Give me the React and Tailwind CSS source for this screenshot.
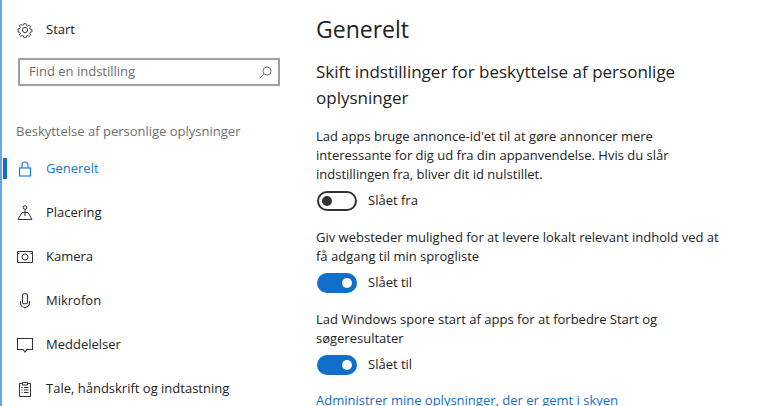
import React from 'react';

const GearIcon = () => (
  <svg width="16" height="16" viewBox="0 0 16 16" fill="none" stroke="#333" strokeWidth="1">
    <circle cx="8" cy="8" r="2.6" />
    <path d="M6.8 1h2.4l.4 2 1.3.6 1.7-1.1 1.7 1.7-1.1 1.7.6 1.3 2 .4v2.4l-2 .4-.6 1.3 1.1 1.7-1.7 1.7-1.7-1.1-1.3.6-.4 2H6.8l-.4-2-1.3-.6-1.7 1.1-1.7-1.7 1.1-1.7-.6-1.3-2-.4V6.8l2-.4.6-1.3-1.1-1.7 1.7-1.7 1.7 1.1 1.3-.6z" transform="translate(0.8 0.8) scale(0.9)" />
  </svg>
);

const LockIcon = () => (
  <svg width="16" height="16" viewBox="0 0 16 16" fill="none" stroke="#0f78d4" strokeWidth="1.1">
    <rect x="2.5" y="7" width="11" height="8" />
    <path d="M5 7V4a3 3 0 0 1 6 0v3" />
  </svg>
);

const PlaceIcon = () => (
  <svg width="16" height="16" viewBox="0 0 16 16" fill="none" stroke="#333" strokeWidth="1">
    <circle cx="8" cy="2.5" r="1.8" />
    <path d="M8 4.5V11M5 7.5h6M5 7.5 1 14.5h14L11 7.5" />
  </svg>
);

const CameraIcon = () => (
  <svg width="16" height="16" viewBox="0 0 16 16" fill="none" stroke="#333" strokeWidth="1">
    <path d="M.5 2.5h15v11H.5z" />
    <path d="M.5 4.500h2M13.500 4.500h2" />
    <circle cx="8" cy="8" r="3" />
  </svg>
);

const MicIcon = () => (
  <svg width="16" height="16" viewBox="0 0 16 16" fill="none" stroke="#333" strokeWidth="1.1">
    <rect x="5.5" y="0.8" width="5" height="10" rx="1.5" />
    <path d="M3.5 8v2a4 4 0 0 0 9 0V8M8 14v1.500" />
  </svg>
);

const MessageIcon = () => (
  <svg width="16" height="16" viewBox="0 0 16 16" fill="none" stroke="#333" strokeWidth="1.1">
    <path d="M.5 1.5h15v11H10L8 15l-2-2.500H.5z" />
  </svg>
);

const SpeechIcon = () => (
  <svg width="16" height="16" viewBox="0 0 16 16" fill="none" stroke="#333" strokeWidth="1">
    <path d="M5 2.500H2.500v13h11v-13H11M5.500 1.500h5v2.500h-5zM4.500 6.500h1M7 6.500h4.500M4.500 9h1M7 9h4.500M4.500 11.500h1M7 11.500h4.500" />
  </svg>
);

const SearchIcon = () => (
  <svg width="13" height="13" viewBox="0 0 13 13" fill="none" stroke="#777" strokeWidth="1">
    <circle cx="8" cy="5" r="4" />
    <path d="M5 8 .8 12.200" />
  </svg>
);

const navItems = [
  { label: 'Generelt', icon: LockIcon, active: true },
  { label: 'Placering', icon: PlaceIcon },
  { label: 'Kamera', icon: CameraIcon },
  { label: 'Mikrofon', icon: MicIcon },
  { label: 'Meddelelser', icon: MessageIcon },
  { label: 'Tale, håndskrift og indtastning', icon: SpeechIcon },
];

const settings = [
  {
    text: ['Lad apps bruge annonce-id\'et til at gøre annoncer mere', 'interessante for dig ud fra din appanvendelse. Hvis du slår', 'indstillingen fra, bliver dit id nulstillet.'],
    on: false,
  },
  {
    text: ['Giv websteder mulighed for at levere lokalt relevant indhold ved at', 'få adgang til min sprogliste'],
    on: true,
  },
  {
    text: ['Lad Windows spore start af apps for at forbedre Start og', 'søgeresultater'],
    on: true,
  },
];

const Toggle = ({ on }) => (
  <div className="flex items-center h-5 ml-px">
    {on ? (
      <div className="w-10 h-5 rounded-full bg-[#0f6fcb] flex items-center justify-end pr-[5px]">
        <div className="w-2.5 h-2.5 rounded-full bg-white" />
      </div>
    ) : (
      <div className="w-10 h-5 rounded-full border-2 border-[#333] flex items-center pl-[3px]">
        <div className="w-2.5 h-2.5 rounded-full bg-[#333]" />
      </div>
    )}
    <span className="ml-[11px] text-[13px] text-[#222]">{on ? 'Slået til' : 'Slået fra'}</span>
  </div>
);

export default function App() {
  return (
    <div className="flex w-[781px] h-[406px] overflow-hidden bg-white font-['Open_Sans','Noto_Sans',sans-serif] border-l-2 border-[#6aa5dc]">
      <aside className="w-[314px] shrink-0 pt-5">
        <div className="flex items-center h-5 pl-[15px]">
          <GearIcon />
          <span className="ml-[13px] text-[13px] text-[#222]">Start</span>
        </div>
        <div className="mt-[18px] ml-4 w-[262px] h-7 border-2 border-[#a0a0a0] flex items-center justify-between pl-[9px] pr-[6px]">
          <span className="text-[13px] text-[#6e6e6e]">Find en indstilling</span>
          <SearchIcon />
        </div>
        <div className="mt-9 ml-[14px] text-[13px] leading-[18px] text-[#6e6e6e] whitespace-nowrap">
          Beskyttelse af personlige oplysninger
        </div>
        <nav className="mt-[7px]">
          {navItems.map(({ label, icon: Icon, active }) => (
            <div key={label} className="relative flex items-center h-11 pl-[15px]">
              {active && <div className="absolute left-px top-[11px] w-1 h-[21px] bg-[#0f6fcb]" />}
              <Icon />
              <span className={`ml-[13px] text-[13px] whitespace-nowrap ${active ? 'text-[#0f78d4]' : 'text-[#222]'}`}>{label}</span>
            </div>
          ))}
        </nav>
      </aside>

      <main className="flex-1 min-w-0 pt-[12px]">
        <h1 className="text-[23px] leading-[34px] text-[#222]">Generelt</h1>
        <h2 className="mt-[13px] w-[400px] text-[17px] leading-[26px] text-[#222]">
          Skift indstillinger for beskyttelse af personlige oplysninger
        </h2>
        <div className="mt-[16px] flex flex-col gap-[17px]">
          {settings.map((s, i) => (
            <div key={i}>
              <p className="text-[13px] leading-[19px] text-[#222] whitespace-nowrap">
                {s.text.map((line) => (
                  <span key={line} className="block">{line}</span>
                ))}
              </p>
              <div className="mt-[7px]">
                <Toggle on={s.on} />
              </div>
            </div>
          ))}
        </div>
        <a className="block mt-[16px] text-[13px] leading-[19px] text-[#0f6fcb] whitespace-nowrap">
          Administrer mine oplysninger, der er gemt i skyen
        </a>
      </main>
    </div>
  );
}
